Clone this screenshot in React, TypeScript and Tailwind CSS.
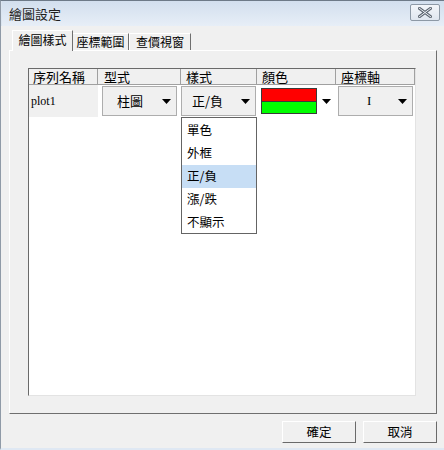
import React from "react";

const cjk = { fontFamily: '"Noto Sans CJK TC", "Noto Sans", sans-serif' };
const serif = { fontFamily: '"Liberation Serif", serif' };

function Arrow() {
  return (
    <svg width="9" height="5" viewBox="0 0 9 5" className="block">
      <path d="M0 0 H9 L4.5 5 Z" fill="#000" />
    </svg>
  );
}

function Combo({ text, textClass, isSerif }: { text: string; textClass: string; isSerif?: boolean }) {
  return (
    <div className="w-[75px] h-[30px] border border-[#adadad] bg-[#f0f0f0] flex items-center">
      <span className={`text-[13px] text-black ${textClass}`} style={isSerif ? serif : cjk}>
        {text}
      </span>
      <div className="ml-auto mr-[5px]">
        <Arrow />
      </div>
    </div>
  );
}

export default function App() {
  const items = ["單色", "外框", "正/負", "漲/跌", "不顯示"];
  return (
    <div
      className="relative w-[444px] h-[450px] bg-[#f0f0f0] overflow-hidden border-l border-l-[#8f9aa7] border-b-[2px] border-b-[#dfe8f3] border-t border-t-[#6d7a88]"
      style={cjk}
    >
      {/* Title bar */}
      <div className="h-[25px] bg-gradient-to-b from-[#d2dfee] to-[#e7eef7] flex items-center pl-[7px] pr-[4px] border-l border-l-[#dbe5f0]">
        <span className="text-[13px] text-[#1e1e1e] leading-none">繪圖設定</span>
        <div className="ml-auto w-[30px] h-[17px] border border-[#8d99a6] rounded-[2px] bg-gradient-to-b from-[#f3f6fa] to-[#dfe6ef] flex items-center justify-center mt-[-2px]">
          <svg width="14" height="11" viewBox="0 0 14 11">
            <path
              d="M1 1 L13 10 M13 1 L1 10"
              stroke="#5d6671"
              strokeWidth="3"
              strokeLinecap="square"
            />
            <path d="M1 1 L13 10 M13 1 L1 10" stroke="#eef2f6" strokeWidth="1" strokeLinecap="square" />
          </svg>
        </div>
      </div>

      {/* Tabs + panel */}
      <div className="ml-[8px] mt-[4px] w-[428px]">
        <div className="flex items-end h-[20px] pl-[3px]">
          <div className="h-[21px] w-[61px] border-t border-l border-white border-r border-r-[#6f6f6f] bg-[#f0f0f0] flex items-start justify-center pt-[2px] relative z-10 mb-[-1px]">
            <span className="text-[12px] leading-[14px] text-black">繪圖樣式</span>
          </div>
          <div className="h-[17px] w-[56px] border-t border-white border-r border-r-[#6f6f6f] flex items-start justify-center pt-[1px]">
            <span className="text-[12px] leading-[14px] text-black">座標範圍</span>
          </div>
          <div className="h-[17px] w-[62px] border-t border-l border-white border-r border-r-[#6f6f6f] flex items-start justify-center pt-[1px]">
            <span className="text-[12px] leading-[14px] text-black">查價視窗</span>
          </div>
        </div>
        <div className="h-[364px] border-t border-l border-white border-r border-r-[#6f6f6f] border-b border-b-[#6f6f6f] pt-[17px] pl-[18px]">
          {/* grid */}
          <div className="relative w-[388px] h-[328px] bg-white border-t border-l border-[#6a6a6a] border-r border-r-[#e3e3e3] border-b border-b-[#e3e3e3]">
            {/* header */}
            <div className="flex h-[16px] text-[13px] leading-[15px] text-black">
              <div className="w-[69px] bg-[#f0f0f0] border-r border-b border-[#a0a0a0] pl-[4px]">序列名稱</div>
              <div className="w-[83px] bg-[#f0f0f0] border-r border-b border-[#a0a0a0] pl-[6px]">型式</div>
              <div className="w-[76px] bg-[#f0f0f0] border-r border-b border-[#a0a0a0] pl-[5px]">樣式</div>
              <div className="w-[79px] bg-[#f0f0f0] border-r border-b border-[#a0a0a0] pl-[5px]">顏色</div>
              <div className="w-[79px] bg-[#f0f0f0] border-r border-b border-[#a0a0a0] pl-[5px]">座標軸</div>
            </div>
            {/* row 1 */}
            <div className="flex h-[32px]">
              <div className="w-[69px] bg-[#f0f0f0] flex items-center pl-[2px]">
                <span className="text-[12px] text-black" style={serif}>plot1</span>
              </div>
              <div className="w-[83px] pl-[4px] pt-[1px]">
                <Combo text="柱圖" textClass="ml-[14px]" />
              </div>
              <div className="w-[76px] pt-[1px]">
                <Combo text="正/負" textClass="ml-[10px]" />
              </div>
              <div className="w-[79px] pl-[4px] flex items-center">
                <div className="w-[56px] h-[26px] border border-[#3a3a3a] flex flex-col">
                  <div className="flex-1 bg-[#ff0000] border-b border-[#3a3a3a]" />
                  <div className="flex-1 bg-[#00ff00]" />
                </div>
                <div className="ml-[5px]">
                  <Arrow />
                </div>
              </div>
              <div className="w-[79px] pl-[2px] pt-[1px]">
                <Combo text="I" textClass="ml-[28px]" isSerif />
              </div>
            </div>

            {/* dropdown list */}
            <div className="absolute left-[152px] top-[48px] w-[76px] h-[117px] bg-white border border-[#646464] pt-[1px]">
              {items.map((it, i) => (
                <div
                  key={it}
                  className={`h-[23px] flex items-center pl-[5px] text-[12.5px] text-black ${i === 2 ? "bg-[#c7def5]" : ""}`}
                >
                  {it}
                </div>
              ))}
            </div>
          </div>
        </div>
      </div>

      {/* buttons */}
      <div className="flex justify-end gap-[7px] mt-[7px] pr-[7px]">
        <div className="w-[74px] h-[22px] bg-[#f0f0f0] border-t border-l border-white border-r border-b border-r-[#6a6a6a] border-b-[#6a6a6a] flex items-center justify-center">
          <span className="text-[12.5px] text-black">確定</span>
        </div>
        <div className="w-[74px] h-[22px] bg-[#f0f0f0] border-t border-l border-white border-r border-b border-r-[#6a6a6a] border-b-[#6a6a6a] flex items-center justify-center">
          <span className="text-[12.5px] text-black">取消</span>
        </div>
      </div>
    </div>
  );
}
